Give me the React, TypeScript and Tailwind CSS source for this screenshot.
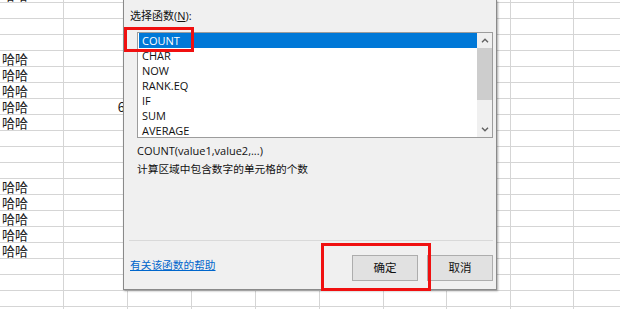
const colWidths = ["w-[64px]", "w-[64px]", "w-[64px]", "w-[64px]", "w-[64px]", "w-[64px]", "w-[63px]", "w-[64px]", "w-[63px]", "w-[64px]"];

const hahaRows = [0, 4, 5, 6, 7, 8, 12, 13, 14, 15, 16, 20];

const functions = ["COUNT", "CHAR", "NOW", "RANK.EQ", "IF", "SUM", "AVERAGE"];

const uiFont = "[font-family:'Open_Sans','Noto_Sans_CJK_SC',sans-serif]";

function Sheet() {
  return (
    <div className="-mt-[13px]">
      {Array.from({ length: 21 }).map((_, r) => (
        <div key={r} className="flex h-[16px] border-b border-[#d5d5d5]">
          {colWidths.map((w, c) => (
            <div
              key={c}
              className={`${w} shrink-0 border-r border-[#d5d5d5] text-[13px] leading-[15px] text-[#1a1a1a] ${c === 1 ? "text-right pr-[2px]" : "pl-[2px]"}`}
            >
              {c === 0 && hahaRows.includes(r) ? "哈哈" : ""}
              {c === 1 && r === 7 ? "6" : ""}
            </div>
          ))}
        </div>
      ))}
    </div>
  );
}

function Chevron({ up }: { up?: boolean }) {
  return (
    <svg width="8" height="5" viewBox="0 0 8 5">
      <polyline
        points={up ? "1,4.2 4,1.2 7,4.2" : "1,0.8 4,3.8 7,0.8"}
        fill="none"
        stroke="#606060"
        strokeWidth="1.4"
      />
    </svg>
  );
}

function ListBox() {
  return (
    <div className="ml-[13px] mt-[9px] w-[356px] h-[106px] border border-[#9c9c9c] bg-white flex overflow-hidden">
      <div className="flex-1 pl-[1px]">
        {functions.map((f, i) => (
          <div
            key={f}
            className={`h-[15px] leading-[15px] pl-[3px] text-[11px] ${i === 0 ? "bg-[#0078d7] text-white" : "text-[#111]"}`}
          >
            {f}
          </div>
        ))}
      </div>
      <div className="w-[15px] bg-[#f0f0f0] flex flex-col">
        <div className="h-[15px] flex items-center justify-center">
          <Chevron up />
        </div>
        <div className="h-[52px] bg-[#cdcdcd]" />
        <div className="flex-1" />
        <div className="h-[15px] flex items-center justify-center">
          <Chevron />
        </div>
      </div>
    </div>
  );
}

function Dialog() {
  return (
    <div
      className={`absolute left-[123px] top-0 w-[374px] h-[290px] bg-[#f0f0f0] border-l border-r border-b border-[#8a8a8a] shadow-[1px_1px_2px_rgba(0,0,0,0.35)] flex flex-col text-[11px] text-[#111] ${uiFont}`}
    >
      <div className="pt-[9px] pl-[6px] leading-[14px]">
        选择函数(<span className="underline">N</span>):
      </div>

      <ListBox />

      <div className="mt-[5px] pl-[13px] leading-[16px]">COUNT(value1,value2,...)</div>
      <div className="mt-[2px] pl-[13px] leading-[16px] text-[10.7px]">计算区域中包含数字的单元格的个数</div>

      <div className="mt-[63px] ml-[5px] w-[364px] h-px bg-[#d9d9d9]" />

      <div className="mt-[14px] flex pl-[6px] pr-[3px]">
        <a className="mt-[3px] leading-[14px] text-[10.7px] text-[#0066cc] underline">有关该函数的帮助</a>
        <div className="ml-auto flex gap-[9px]">
          <button className="w-[66px] h-[26px] bg-[#e1e1e1] border border-[#adadad] text-[11.5px] text-[#111]">
            确定
          </button>
          <button className="w-[66px] h-[26px] bg-[#e1e1e1] border border-[#adadad] text-[11.5px] text-[#111]">
            取消
          </button>
        </div>
      </div>
    </div>
  );
}

export default function App() {
  return (
    <div className="relative w-[620px] h-[309px] overflow-hidden bg-white [font-family:'Noto_Sans_CJK_SC',sans-serif]">
      <Sheet />
      <Dialog />

      {/* annotation boxes */}
      <div className="absolute left-[124px] top-[27px] w-[70px] h-[25px] border-[3px] border-[#f01010]" />
      <div className="absolute left-[321px] top-[243px] w-[110px] h-[48px] border-[3px] border-[#f01010]" />
    </div>
  );
}
